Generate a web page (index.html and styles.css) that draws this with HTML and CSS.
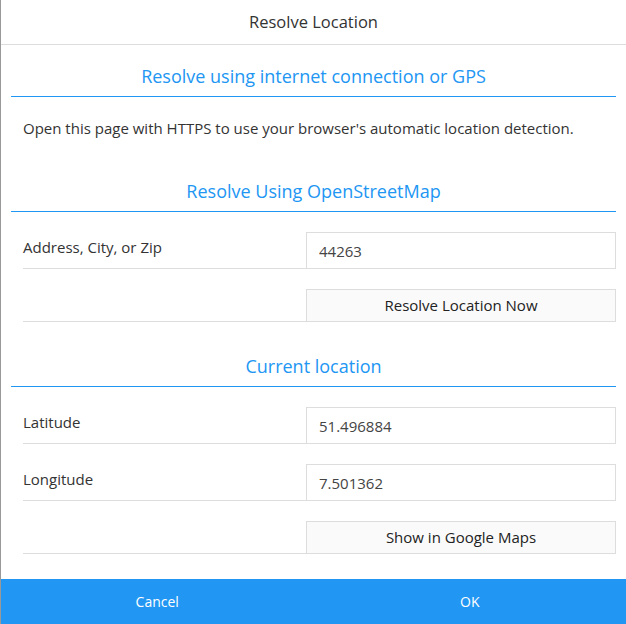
FILE: index.html
```html
<!DOCTYPE html>
<html lang="en">
<head>
    <meta charset="UTF-8">
    <meta name="viewport" content="width=device-width, initial-scale=1.0">
    <title>Resolve Location</title>
    <link rel="stylesheet" href="styles.css">
</head>
<body>
    <div class="dialog">
        <div class="dialog-title">Resolve Location</div>

        <div class="dialog-body">
            <div class="section">
                <h2 class="section-title">Resolve using internet connection or GPS</h2>
                <p class="hint">Open this page with HTTPS to use your browser's automatic location detection.</p>
            </div>

            <div class="section">
                <h2 class="section-title">Resolve Using OpenStreetMap</h2>
                <div class="form-row">
                    <label class="form-label" for="address">Address, City, or Zip</label>
                    <input class="form-input" id="address" type="text" value="44263">
                </div>
                <div class="form-row">
                    <span class="form-label"></span>
                    <button class="form-button">Resolve Location Now</button>
                </div>
            </div>

            <div class="section">
                <h2 class="section-title">Current location</h2>
                <div class="form-row">
                    <label class="form-label" for="lat">Latitude</label>
                    <input class="form-input" id="lat" type="text" value="51.496884">
                </div>
                <div class="form-row">
                    <label class="form-label" for="lng">Longitude</label>
                    <input class="form-input" id="lng" type="text" value="7.501362">
                </div>
                <div class="form-row">
                    <span class="form-label"></span>
                    <button class="form-button">Show in Google Maps</button>
                </div>
            </div>
        </div>

        <div class="dialog-actions">
            <button class="action">Cancel</button>
            <button class="action">OK</button>
        </div>
    </div>
</body>
</html>
```

FILE: styles.css
```css
:root {
    --blue: #2196f3;
    --line: #dddddd;
    --text: #333333;
}

body {
    margin: 0;
    font-family: 'Open Sans', 'Noto Sans', sans-serif;
    color: var(--text);
    background-color: #fff;
}

.dialog {
    height: 624px;
    display: flex;
    flex-direction: column;
    border-left: 1px solid #999;
    box-sizing: border-box;
}

.dialog-title {
    height: 44px;
    line-height: 44px;
    text-align: center;
    font-size: 16.5px;
    border-bottom: 1px solid var(--line);
}

.dialog-body {
    flex: 1;
    padding: 0 10px 0 10px;
}

.section-title {
    margin: 32px 0 0;
    padding-bottom: 8px;
    height: 24px;
    line-height: 24px;
    font-size: 18px;
    font-weight: normal;
    text-align: center;
    color: var(--blue);
    border-bottom: 1px solid var(--blue);
}

.section:first-child .section-title {
    margin-top: 19px;
}

.hint {
    margin: 20px 12px 40px;
    font-size: 15px;
    line-height: 22px;
}

.form-row {
    display: flex;
    align-items: flex-start;
    margin: 0 0 0 12px;
    padding-top: 20px;
    border-bottom: 1px solid var(--line);
}

.form-label {
    width: 283px;
    flex: none;
    padding-top: 5px;
    font-size: 15px;
    line-height: 20px;
}

.form-input,
.form-button {
    flex: 1;
    box-sizing: border-box;
    margin: 0;
    border: 1px solid var(--line);
    border-bottom: none;
    font-family: inherit;
    color: #444;
}

.form-input {
    height: 36px;
    padding: 0 12px;
    font-size: 15px;
    background-color: #fff;
    outline: none;
}

.form-button {
    height: 32px;
    padding: 0 0 1px;
    font-size: 15px;
    color: #222;
    background-color: #fafafa;
    cursor: pointer;
}

.dialog-actions {
    display: flex;
    height: 45px;
    background-color: var(--blue);
}

.action {
    flex: 1;
    border: none;
    background: none;
    color: #fff;
    font-family: inherit;
    font-size: 14px;
    cursor: pointer;
}
```
